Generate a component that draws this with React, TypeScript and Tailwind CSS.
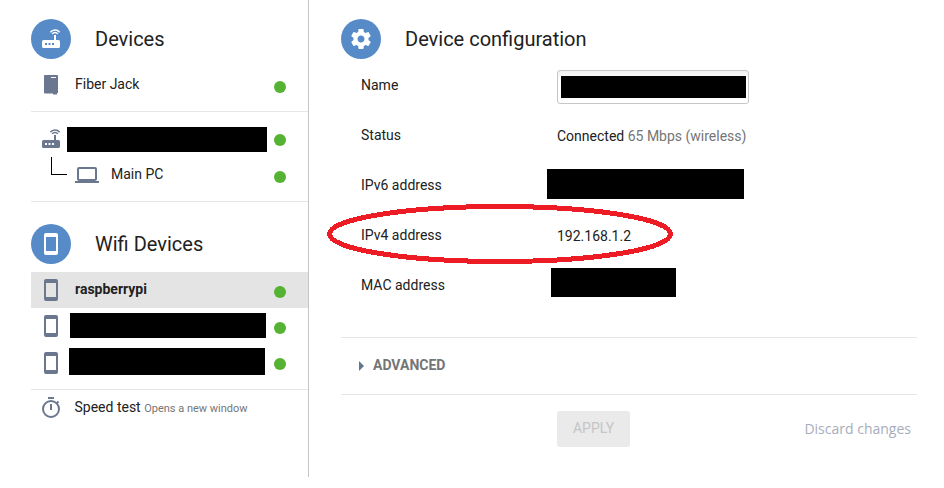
import type { ReactNode } from "react";

const Dot = ({ className = "" }: { className?: string }) => (
  <span className={`ml-auto mr-[22px] size-3 shrink-0 rounded-full bg-[#55b232] ${className}`} />
);

const Badge = ({ children }: { children: ReactNode }) => (
  <span className="flex size-10 shrink-0 items-center justify-center rounded-full bg-[#568bc8]">{children}</span>
);

const Heading = ({ icon, children }: { icon: ReactNode; children: ReactNode }) => (
  <header className="flex h-10 items-center gap-6">
    <Badge>{icon}</Badge>
    <h2 className="text-xl leading-10 whitespace-nowrap">{children}</h2>
  </header>
);

const Router = ({ fill, eyes }: { fill: string; eyes: string }) => (
  <svg width="18" height="20" viewBox="0 0 18 20" fill="none" className="shrink-0">
    <rect x="0" y="11" width="18" height="8" rx="1.6" fill={fill} />
    <path d="M12 6h2v5.5h-2z" fill={fill} />
    <path d="M8.400 3.300C10.600 .2 15.400 .2 17.600 3.300M10.200 4.900c1.400-1.900 4.200-1.900 5.600 0" stroke={fill} strokeWidth="1.500" />
    <path d="M3 14h2v2H3zM6.500 14h2v2h-2zM10 14h2v2h-2z" fill={eyes} />
  </svg>
);

const Phone = ({ fill }: { fill: string }) => (
  <svg width="14" height="22" viewBox="0 0 14 22" fill={fill} className="shrink-0">
    <path fillRule="evenodd" d="M2 0h10a2 2 0 0 1 2 2v18a2 2 0 0 1-2 2H2a2 2 0 0 1-2-2V2a2 2 0 0 1 2-2zM2 4v14h10V4z" />
  </svg>
);

const Gear = () => (
  <svg width="24" height="24" viewBox="0 0 24 24" fill="#fff">
    <path d="M19.430 12.980c.040-.320.070-.640.070-.980s-.030-.660-.070-.980l2.110-1.650c.190-.150.240-.420.120-.640l-2-3.460c-.120-.220-.390-.300-.610-.220l-2.490 1c-.520-.400-1.080-.730-1.690-.980l-.380-2.650C14.460 2.180 14.250 2 14 2h-4c-.250 0-.460.180-.490.420l-.380 2.650c-.610.250-1.170.590-1.690.980l-2.490-1c-.230-.090-.490 0-.610.220l-2 3.460c-.130.220-.070.490.120.640l2.110 1.650c-.040.320-.070.650-.070.980s.030.660.070.980l-2.110 1.650c-.190.150-.240.420-.120.640l2 3.460c.120.220.390.300.610.220l2.490-1c.520.400 1.080.730 1.690.980l.380 2.650c.030.240.240.420.490.420h4c.250 0 .460-.180.490-.420l.380-2.650c.610-.250 1.170-.590 1.690-.980l2.490 1c.230.090.490 0 .610-.220l2-3.460c.120-.220.070-.490-.120-.640l-2.110-1.650zM12 15.500c-1.930 0-3.500-1.570-3.500-3.500s1.570-3.500 3.500-3.500 3.500 1.570 3.500 3.500-1.570 3.500-3.500 3.500z" />
  </svg>
);

const Sidebar = () => (
  <aside className="flex h-[477px] w-[309px] shrink-0 flex-col border-r border-[#c6c6c6] pt-[19px] pl-[31px]">
    <Heading icon={<Router fill="#fff" eyes="#568bc8" />}>Devices</Heading>
    <div className="flex h-[53px] items-start border-b border-[#e6e6e6] pt-4">
      <svg width="14" height="20" viewBox="0 0 14 20" className="ml-[13px]">
        <path d="M1 0h12a1 1 0 0 1 1 1v17h-1v1.500h-4V18.500H1a1 1 0 0 1-1-1V1a1 1 0 0 1 1-1z" fill="#6b778f" />
        <path d="M7 2h5v1H7z" fill="#fff" />
      </svg>
      <span className="ml-[17px] leading-[18px]">Fiber Jack</span>
      <Dot className="mt-[6px]" />
    </div>
    <div className="flex h-[90px] flex-col border-b border-[#e6e6e6] pt-[15px]">
      <div className="flex items-start">
        <div className="mt-[2px] ml-[11px]">
          <Router fill="#6b778f" eyes="#fff" />
        </div>
        <div className="ml-[7px] h-[25px] w-[200px] bg-black" />
        <Dot className="mt-[7px] self-start" />
      </div>
      <div className="flex items-start pt-[5px]">
        <div className="ml-5 h-[18px] w-4 border-b border-l border-black" />
        <svg width="24" height="16" viewBox="0 0 24 16" className="mt-[10px] ml-2" fill="#6b778f">
          <path fillRule="evenodd" d="M4 0h16a2 2 0 0 1 2 2v10a2 2 0 0 1-2 2h4v2H0v-2h4a2 2 0 0 1-2-2V2a2 2 0 0 1 2-2zM4 2v10h16V2z" />
        </svg>
        <span className="mt-2 ml-3 leading-[18px]">Main PC</span>
        <Dot className="mt-[14px]" />
      </div>
    </div>
    <div className="pt-[22px]">
      <Heading icon={<Phone fill="#fff" />}>Wifi Devices</Heading>
    </div>
    <div className="mt-2 flex h-9 items-center bg-[#e4e4e4] pl-[13px]">
      <Phone fill="#6b778f" />
      <span className="-mt-0.5 ml-[17px] font-bold">raspberrypi</span>
      <Dot className="mt-1" />
    </div>
    <div className="flex h-9 items-center pl-[13px]">
      <Phone fill="#6b778f" />
      <div className="-mt-px ml-3 h-[25px] w-[196px] bg-black" />
      <Dot className="mt-1" />
    </div>
    <div className="flex h-[46px] items-start border-b border-[#e6e6e6] pt-1 pl-[13px]">
      <div className="mt-1">
        <Phone fill="#6b778f" />
      </div>
      <div className="ml-[11px] h-[27px] w-[196px] bg-black" />
      <Dot className="mt-[10px]" />
    </div>
    <div className="flex items-start pt-[7px] pl-[11px]">
      <svg width="18" height="21" viewBox="0 0 18 21" fill="none" stroke="#6b778f" strokeWidth="2">
        <circle cx="9" cy="12" r="8" />
        <path d="M6 1h6M9 7v6M14.800 6.200l1.700-1.700" />
      </svg>
      <span className="ml-[14.5px] leading-[20px] whitespace-nowrap">
        Speed test <span className="text-[11px] text-[#757575]">Opens a new window</span>
      </span>
    </div>
  </aside>
);

const Field = ({ label, children }: { label: string; children?: ReactNode }) => (
  <div className="flex h-[50px] items-start pl-5">
    <span className="w-[196px] shrink-0 pt-[17px] leading-[18px]">{label}</span>
    {children}
  </div>
);

const Configuration = () => (
  <main className="flex w-[608px] flex-col pt-[19px] pl-8">
    <Heading icon={<Gear />}>Device configuration</Heading>
    <Field label="Name">
      <div className="mt-[11px] h-[34px] w-48 rounded-[3px] border border-[#c6c6c6] bg-linear-to-b from-[#f1f1f1] to-white to-30% pt-[5px] pl-[3px]">
        <div className="h-[22px] w-[185px] bg-black" />
      </div>
    </Field>
    <Field label="Status">
      <span className="pt-[18px] leading-[18px] whitespace-nowrap">
        Connected <span className="text-[#757575]">65 Mbps (wireless)</span>
      </span>
    </Field>
    <Field label="IPv6 address">
      <div className="mt-[10px] -ml-[10px] h-[30px] w-[197px] bg-black" />
    </Field>
    <Field label="IPv4 address">
      <span className="pt-[18px] leading-[18px]">192.168.1.2</span>
    </Field>
    <Field label="MAC address">
      <div className="mt-[9px] -ml-[6px] h-[29px] w-[125px] bg-black" />
    </Field>
    <div className="mt-7 flex h-[58px] items-center border-y border-[#e6e6e6] pl-[18px] font-bold text-[#757575]">
      <svg width="5" height="10" viewBox="0 0 5 10" fill="#60788f">
        <path d="M0 0l5 5-5 5z" />
      </svg>
      <span className="-mt-0.5 ml-[9px]">ADVANCED</span>
    </div>
    <div className="mt-4 flex h-9 items-center justify-between pr-[6px] pl-[216px]">
      <button className="h-9 w-[73px] rounded-[3px] bg-[#eaeaea] pb-0.5 text-[#c5c5c5]">APPLY</button>
      <span className="font-['Open_Sans'] text-[#a6adbc]">Discard changes</span>
    </div>
  </main>
);

export default function App() {
  return (
    <div className="relative flex h-[488px] w-[944px] overflow-hidden bg-white font-[Roboto,sans-serif] text-sm text-[#212121]">
      <Sidebar />
      <Configuration />
      <svg className="pointer-events-none absolute top-[200px] left-[324px]" width="354" height="68" shapeRendering="crispEdges">
        <ellipse cx="176" cy="34" rx="170.500" ry="27.500" fill="none" stroke="#ed1c24" strokeWidth="5" />
      </svg>
    </div>
  );
}
